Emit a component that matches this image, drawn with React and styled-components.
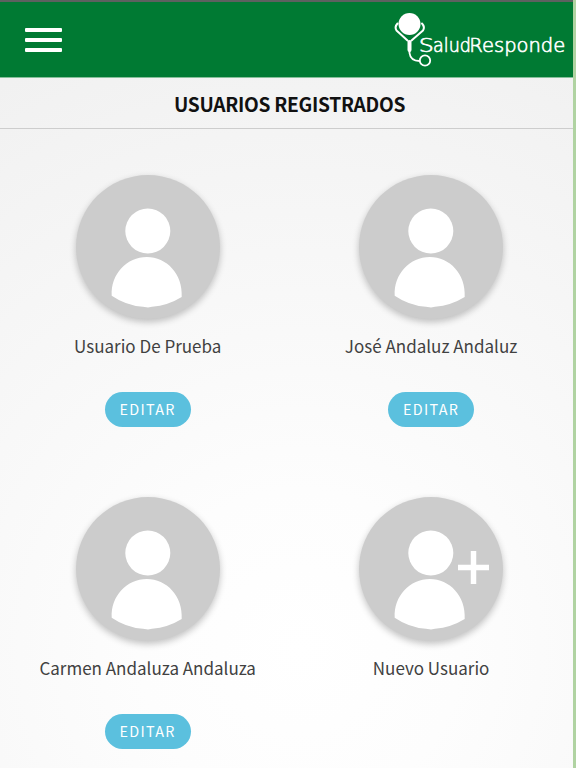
import React from 'react';
import styled, { createGlobalStyle } from 'styled-components';

const GlobalStyle = createGlobalStyle`
  *, *::before, *::after { box-sizing: border-box; }
  body {
    margin: 0;
    overflow: hidden;
    font-family: 'Noto Sans CJK SC', 'Noto Sans', sans-serif;
  }
`;

const Screen = styled.div`
  display: flex;
  flex-direction: column;
  width: 576px;
  height: 768px;
  overflow: hidden;
  border-right: 3px solid #b0d3a2;
  background: radial-gradient(circle 640px at 300px 650px, #ffffff 0%, #fdfdfd 25%, #f8f8f8 56%, #f1f1f1 100%);
`;

const TopBar = styled.header`
  display: flex;
  flex: none;
  align-items: flex-start;
  justify-content: space-between;
  height: 78px;
  border-top: 2px solid #5d6160;
  border-bottom: 1px solid #86bf9a;
  background: #007a33;
`;

const MenuButton = styled.button`
  display: flex;
  flex-direction: column;
  gap: 6px;
  margin: 26px 0 0 25px;
  padding: 0;
  border: 0;
  background: none;
`;

const MenuBar = styled.span`
  width: 37px;
  height: 4px;
  border-radius: 1px;
  background: #ffffff;
`;

const Logo = styled.svg`
  display: block;
  flex: none;
  width: 181px;
  height: 72px;
  margin-right: 2px;
  overflow: visible;
`;

const LogoText = styled.text`
  font-family: 'DejaVu Sans', sans-serif;
  font-size: 19.5px;
  font-weight: 200;
  fill: #ffffff;
  stroke: #ffffff;
  stroke-width: 0.65px;
`;

const Title = styled.h1`
  display: flex;
  flex: none;
  align-items: center;
  justify-content: center;
  height: 51px;
  margin: 0;
  padding: 2px 0 0 6px;
  border-bottom: 1px solid #cdcdcd;
  color: #111111;
  font-size: 19.2px;
  font-weight: 700;
  letter-spacing: -0.3px;
  line-height: 30px;
`;

const UserGrid = styled.main`
  display: grid;
  flex: none;
  grid-template-columns: repeat(2, 283.4px);
  grid-auto-rows: 322.4px;
  padding: 46px 0 0 6px;
`;

const UserCard = styled.section`
  display: flex;
  flex-direction: column;
  align-items: center;
`;

const Avatar = styled.svg`
  flex: none;
  width: 144px;
  height: 144px;
  border-radius: 50%;
  background: #cccccc;
  box-shadow: 0 3px 7px rgba(0, 0, 0, 0.24);
`;

const UserName = styled.p`
  margin: 13px 0 0;
  color: #414141;
  font-size: 17px;
  line-height: 27px;
  white-space: nowrap;
`;

const EditButton = styled.button`
  width: 86px;
  height: 35px;
  margin-top: 33px;
  padding: 0 0 1px;
  border: 0;
  border-radius: 18px;
  background: #5bc0de;
  color: #ffffff;
  font-family: inherit;
  font-size: 14.4px;
  letter-spacing: 1.3px;
  line-height: 22px;
`;

const users = [
  { name: 'Usuario De Prueba', editable: true },
  { name: 'José Andaluz Andaluz', editable: true },
  { name: 'Carmen Andaluza Andaluza', editable: true },
  { name: 'Nuevo Usuario', editable: false },
];

function BrandLogo() {
  return (
    <Logo viewBox="390 2 181 72" role="img" aria-label="SaludResponde">
      <circle cx="409.5" cy="24" r="11" fill="#fff" />
      <g fill="none" stroke="#fff" strokeLinecap="round" strokeLinejoin="round">
        <path d="M397.500 23.500Q394.300 27 396.500 30.500L407.500 40.500M422 23.500Q425.200 27 423 30.500L411.500 40.500" strokeWidth="2" />
        <path d="M409.500 42V50" strokeWidth="4" />
        <path d="M409.500 49V53Q410.500 61 419.500 61" strokeWidth="1.800" />
        <circle cx="425" cy="60.500" r="5.200" strokeWidth="1.800" />
      </g>
      <LogoText transform="translate(418.800 52) scale(1.22 1)">S</LogoText>
      <LogoText transform="translate(433 52) scale(.9 1)">alud</LogoText>
      <LogoText transform="translate(469.300 52) scale(1 1)">Responde</LogoText>
    </Logo>
  );
}

function UserAvatar({ isNew }) {
  return (
    <Avatar viewBox="0 0 144 144" aria-hidden="true">
      <g fill="#fff">
        <circle cx="71.800" cy="56" r="22.500" />
        <path d="M35.700 120.700C34.500 99 51 82 70.800 82S107 99 105.700 122Q92 130.500 76 131.700L72 132.600L67 131.800Q50 130.500 35.700 120.700Z" />
      </g>
      {isNew && <path d="M99 70.500H130M114.500 54V87" fill="none" stroke="#fff" strokeWidth="5.500" />}
    </Avatar>
  );
}

export default function App() {
  return (
    <>
      <GlobalStyle />
      <Screen>
        <TopBar>
          <MenuButton aria-label="Menú">
            <MenuBar />
            <MenuBar />
            <MenuBar />
          </MenuButton>
          <BrandLogo />
        </TopBar>
        <Title>USUARIOS REGISTRADOS</Title>
        <UserGrid>
          {users.map((user) => (
            <UserCard key={user.name}>
              <UserAvatar isNew={!user.editable} />
              <UserName>{user.name}</UserName>
              {user.editable && <EditButton>EDITAR</EditButton>}
            </UserCard>
          ))}
        </UserGrid>
      </Screen>
    </>
  );
}
